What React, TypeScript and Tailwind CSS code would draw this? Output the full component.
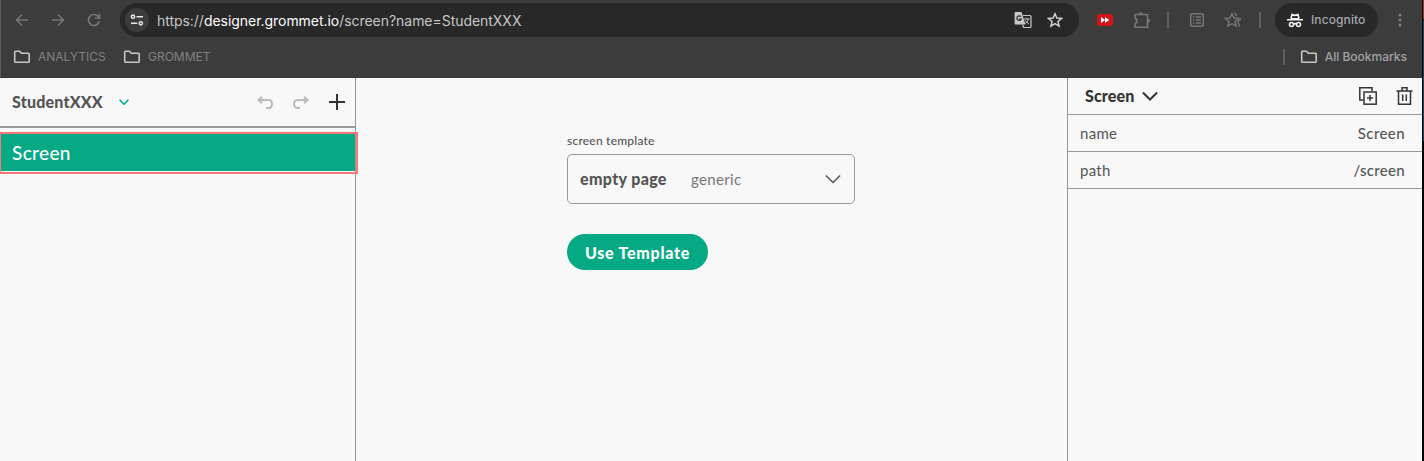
import React from "react";

const Folder = () => (
  <svg className="h-[14px] w-[18px] shrink-0" viewBox="0 0 18 14" fill="none" stroke="#c7c7c7" strokeWidth="1.6" strokeLinejoin="round">
    <path d="M2.500 1.300h4l1.800 2h7.100q.8 0 .8.8v7.400q0 .8-.8.8H2.500q-.8 0-.8-.8V2.100q0-.8.8-.8z" />
  </svg>
);

const Chevron = ({ className, color, width }: { className: string; color: string; width: number }) => (
  <svg className={className} viewBox="0 0 18 10" fill="none" stroke={color} strokeWidth={width}>
    <path d="M1 1l8 8 8-8" />
  </svg>
);

const Divider = ({ className = "" }: { className?: string }) => (
  <div className={`h-4 w-[2px] shrink-0 bg-[#5f5f5f] ${className}`} />
);

function BrowserBar() {
  return (
    <header className="h-[78px] shrink-0 border-b border-l border-b-[#353535] border-l-[#5b5b5b] bg-[#3c3c3c] font-['Inter',sans-serif]">
      <div className="flex h-[40px] items-center pl-[14px]">
        <svg className="h-[14px] w-[14px]" viewBox="0 0 14 14" fill="none" stroke="#777" strokeWidth="1.5">
          <path d="M13 7H2M7 1.5L1.5 7 7 12.5" />
        </svg>
        <svg className="ml-[22px] h-[14px] w-[14px]" viewBox="0 0 14 14" fill="none" stroke="#777" strokeWidth="1.5">
          <path d="M1 7h11M7 1.5L12.5 7 7 12.5" />
        </svg>
        <svg className="ml-[22px] h-[14px] w-[14px]" viewBox="0 0 14 14" fill="none" stroke="#777" strokeWidth="1.6">
          <path d="M12.3 8.3A5.5 5.5 0 1 1 11 3.2L12.2 4.5M12.5 .7v4.6H8" />
        </svg>
        <div className="ml-[19px] flex h-[34px] w-[959px] items-center rounded-full bg-[#282828] pl-[5px] pr-[16px]">
          <div className="flex size-[24px] items-center justify-center rounded-full bg-[#3c3c3c]">
            <svg className="size-[14px]" viewBox="0 0 14 14" fill="none" stroke="#e6e6e6" strokeWidth="1.5">
              <circle cx="3" cy="3.7" r="1.6" />
              <path d="M6.5 3.7H13M1 10.3h6.2" />
              <circle cx="10.8" cy="10.3" r="1.6" />
            </svg>
          </div>
          <span className="ml-[8px] whitespace-nowrap text-[14px] tracking-[-0.04px] text-[#c7c7c7]">
            https://<span className="text-white">designer.grommet.io</span>/screen?name=StudentXXX
          </span>
          <svg className="ml-auto size-[18px]" viewBox="0 0 18 18">
            <path d="M1.5 1h6l4 12.5h-10Q.6 13.500.6 12.500V2Q.6 1 1.500 1z" fill="#c7c7c7" />
            <path d="M9 4.500h7q1 0 1 1v10q0 1-1 1H9.500L8.500 13.500" fill="none" stroke="#c7c7c7" strokeWidth="1.200" />
            <path d="M7 5.700A2.300 2.300 0 1 0 7.300 8H5" fill="none" stroke="#282828" strokeWidth="1.200" />
            <path d="M10 8h5.500M12.700 6.800V8M14.500 8q-.6 2.700-3 4.500M11.300 9.500l3.700 3.700" fill="none" stroke="#c7c7c7" strokeWidth="1" />
          </svg>
          <svg className="ml-[15px] size-[16px]" viewBox="0 0 16 16" fill="none" stroke="#d0d0d0" strokeWidth="1.5">
            <path d="M8 1.700l1.900 4.300 4.700.4-3.600 3.100 1.100 4.600L8 11.700l-4.100 2.400L5 9.500 1.400 6.400 6.100 6z" />
          </svg>
        </div>
        <svg className="ml-[18px] h-[12px] w-[16px]" viewBox="0 0 16 12">
          <rect width="16" height="12" rx="3" fill="#d4141b" />
          <path d="M4 3l4.200 3L4 9zM8 3l4.200 3L8 9z" fill="#fff" />
        </svg>
        <svg className="ml-[20px] h-[17px] w-[18px]" viewBox="0 0 18 17" fill="none" stroke="#777" strokeWidth="1.6" strokeLinejoin="round">
          <path d="M2 2.500h12.500v12.700H2v-4q2.200-.2 2.200-2.300T2 6.600z" />
          <path d="M7 2q.8-1.500 2 0M15 7.500q1.900.9 0 2.500" strokeWidth="2" />
        </svg>
        <Divider className="ml-[16px]" />
        <svg className="ml-[21px] h-[14px] w-[14px]" viewBox="0 0 14 14" fill="none" stroke="#777" strokeWidth="1.500">
          <rect x=".7" y=".7" width="12.600" height="12.600" rx="1.500" />
          <path d="M3 4h1.500M3 7h1.500M3 10h1.500M6 4h5M6 7h5M6 10h5" />
        </svg>
        <svg className="ml-[20px] h-[16px] w-[18px]" viewBox="0 0 18 16" fill="none" stroke="#777" strokeWidth="1.400">
          <path d="M8 1.700l1.900 4.300 4.700.4-3.600 3.100 1.100 4.600L8 11.700l-4.100 2.400L5 9.500 1.400 6.400 6.100 6zM11 .8l1.300 3.500M17 6.500l-3 2.700 1.500 5.500" />
        </svg>
        <Divider className="ml-[17px]" />
        <div className="ml-[14px] flex h-[34px] w-[103px] items-center rounded-full bg-[#282828] pl-[12px]">
          <svg className="h-[15px] w-[16px]" viewBox="0 0 16 15" fill="none" stroke="#f1f1f1" strokeWidth="1.600">
            <path d="M4 5.700l1-4.200 3 .8 3-.8 1 4.200M0 6.700h16" />
            <path d="M4 5h8v1.500H4z" fill="#f1f1f1" stroke="none" />
            <circle cx="4.500" cy="11.500" r="2" /><circle cx="11.500" cy="11.500" r="2" /><path d="M6.500 11q1.500-.8 3 0" />
          </svg>
          <span className="ml-[8px] text-[12px] font-medium tracking-[0.1px] text-[#a4a7ab]">Incognito</span>
        </div>
        <svg className="ml-[20px] h-[14px] w-[4px]" viewBox="0 0 4 14" fill="#7b7b7b">
          <circle cx="2" cy="2" r="1.600" /><circle cx="2" cy="7" r="1.600" /><circle cx="2" cy="12" r="1.600" />
        </svg>
      </div>
      <div className="flex h-[34px] items-center pl-[12px] pr-[15px] text-[12px] text-[#818181]">
        <Folder />
        <span className="ml-[7px] w-[85px]">ANALYTICS</span>
        <Folder />
        <span className="ml-[7px]">GROMMET</span>
        <Divider className="ml-auto" />
        <div className="ml-[15px] flex items-center gap-[7px] text-[#a0a3a7]">
          <Folder />
          <span className="font-medium">All Bookmarks</span>
        </div>
      </div>
    </header>
  );
}

function Sidebar() {
  return (
    <aside className="relative w-[356px] shrink-0 border-r border-[#999]">
      <div className="flex h-[50px] items-center border-b-2 border-[#999] pl-[12px] pr-[10px]">
        <span className="w-[107px] text-[16px] font-black tracking-[0.2px] text-[#555]">StudentXXX</span>
        <Chevron className="h-[6px] w-[10px]" color="#01a982" width={2.8} />
        <svg className="ml-auto h-[13px] w-[16px]" viewBox="0 0 16 13" fill="none" stroke="#bbb" strokeWidth="2">
          <path d="M5 .7L1.500 4 5 7.300M1.500 4H11q4 0 4 4t-4 4H9" />
        </svg>
        <svg className="ml-[20px] h-[13px] w-[16px]" viewBox="0 0 16 13" fill="none" stroke="#bbb" strokeWidth="2">
          <path d="M11 .7L14.500 4 11 7.300M14.500 4H5Q1 4 1 8t4 4h2" />
        </svg>
        <svg className="ml-[20px] size-[16px]" viewBox="0 0 16 16" stroke="#333" strokeWidth="2"><path d="M8 0v16M0 8h16" /></svg>
      </div>
      <div className="mt-[6px] flex h-[37px] items-center bg-[#05aa84] pl-[12px] pt-[2px] text-[19px] font-medium tracking-[0.35px] text-white">Screen</div>
      <div className="absolute -right-[3px] left-0 top-[54px] h-[42px] border-2 border-l border-[#ff7777]" />
    </aside>
  );
}

function Inspector() {
  return (
    <aside className="w-[355px] shrink-0 border-l border-[#999] text-[15px] text-[#555]">
      <div className="flex h-[37px] items-center border-b border-[#999] pl-[17px] pr-[9px]">
        <span className="w-[57px] text-[16px] font-black tracking-[0.15px] text-[#333]">Screen</span>
        <Chevron className="h-[10px] w-[16px]" color="#333" width={2.2} />
        <svg className="ml-auto size-[18px]" viewBox="0 0 18 18" fill="none" stroke="#333" strokeWidth="1.500">
          <path d="M4 13H.8V.8H13V4" /><rect x="5" y="5" width="12.200" height="12.200" /><path d="M11 8v6M8 11h6" />
        </svg>
        <svg className="ml-[19px] h-[18px] w-[17px]" viewBox="0 0 16 18" fill="none" stroke="#333" strokeWidth="1.500">
          <path d="M0 4h16M2 4v13.200h12V4M5.500 4V.8h5V4M6.200 7.500v6.500M9.800 7.500v6.500" />
        </svg>
      </div>
      <div className="flex h-[37px] items-center justify-between border-b border-[#999] pl-[12px] pr-[17px]"><span className="tracking-[0.3px]">name</span><span className="font-medium tracking-[0.4px]">Screen</span></div>
      <div className="flex h-[37px] items-center justify-between border-b border-[#999] pl-[12px] pr-[17px]"><span className="tracking-[0.3px]">path</span><span className="font-medium tracking-[0.3px]">/screen</span></div>
    </aside>
  );
}

export default function App() {
  return (
    <div className="flex h-[461px] w-[1424px] overflow-hidden bg-[#f8f8f8]">
      <div className="flex w-[1422px] flex-col">
        <BrowserBar />
        <div className="flex flex-1 font-['Lato',sans-serif]">
          <Sidebar />
          <main className="flex-1 pl-[211px] pt-[54px] text-[#555]">
            <div className="text-[12px] font-medium leading-[18px] tracking-[0.22px]">screen template</div>
            <button className="mt-[4px] flex h-[50px] w-[288px] items-center rounded-[5px] border border-[#999] pl-[12px] pr-[13px]">
              <span className="w-[111px] text-left text-[16px] font-black tracking-[0.35px]">empty page</span>
              <span className="text-[15px] tracking-[0.35px] text-[#777]">generic</span>
              <Chevron className="ml-auto h-[10px] w-[16px]" color="#555" width={1.7} />
            </button>
            <button className="mt-[30px] flex h-[36px] w-[141px] items-center justify-center rounded-full bg-[#05aa84] pt-[2px] text-[16px] font-black tracking-[0.75px] text-white">Use Template</button>
          </main>
          <Inspector />
        </div>
      </div>
      <div className="flex w-[2px] flex-col border-l border-black bg-black">
        <div className="h-[19px] bg-[#b0341b]" />
        <div className="mt-px h-[121px] bg-[#174474]" />
      </div>
    </div>
  );
}
